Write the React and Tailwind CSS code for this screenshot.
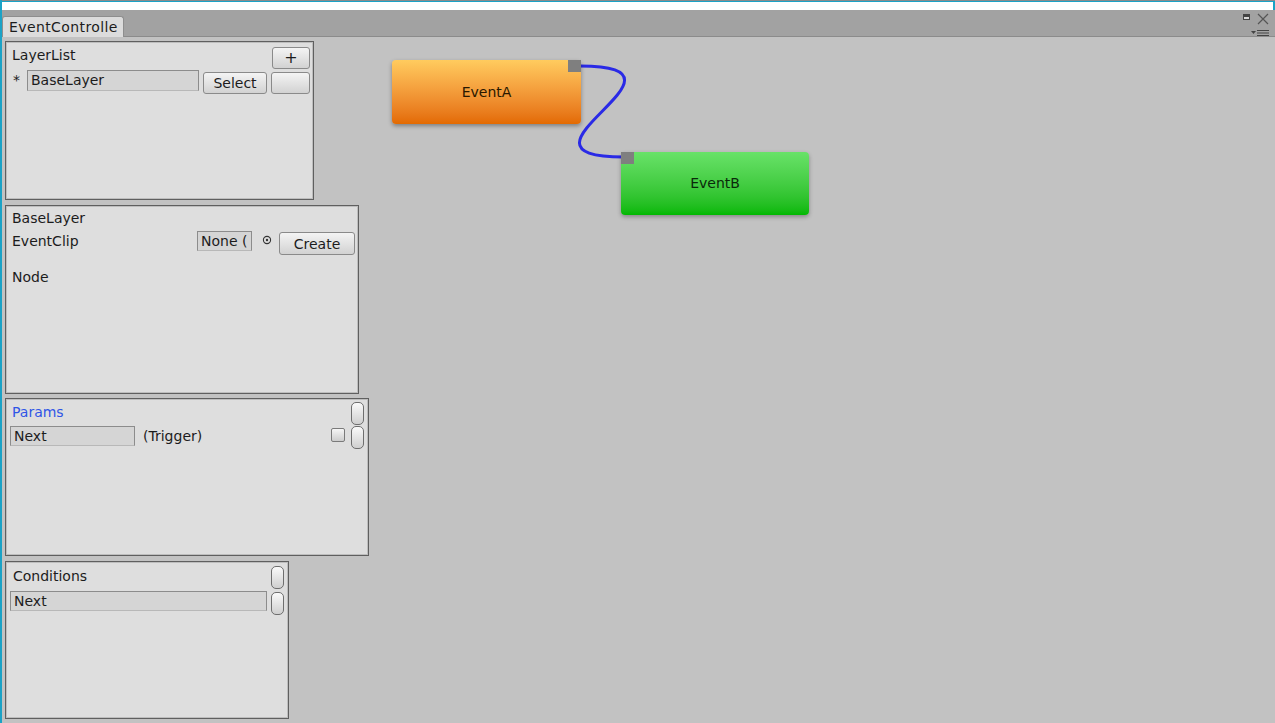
import React from 'react';

const font = { fontFamily: '"DejaVu Sans", Verdana, sans-serif' };

const Btn = ({ className = '', children }) => (
    <div className={`flex items-center justify-center rounded-[3px] border border-[#8a8a8a] bg-gradient-to-b from-[#f4f4f4] to-[#d2d2d2] text-[14px] text-[#1c1c1c] leading-none ${className}`}>
        {children}
    </div>
);

const Pill = ({ className = '' }) => (
    <div className={`w-[13px] h-[23px] rounded-[5px] border border-[#6e6e6e] bg-gradient-to-b from-[#fafafa] to-[#cfcfcf] ${className}`} />
);

const Field = ({ className = '', children }) => (
    <div className={`flex items-center pl-[3px] bg-[#d5d5d5] border border-[#8c8c8c] border-b-[#b8b8b8] text-[14px] text-[#1c1c1c] overflow-hidden whitespace-nowrap ${className}`}>
        {children}
    </div>
);

const Panel = ({ className = '', children }) => (
    <div className={`bg-[#dedede] border border-[#5f5f5f] shadow-[inset_0_0_0_1px_#bdbdbd] ${className}`}>
        {children}
    </div>
);

const App = () => {
    return (
        <div className="relative w-[1275px] h-[723px] overflow-hidden bg-[#c2c2c2] border-l-2 border-[#1ba2c6]" style={font}>
            {/* top strip */}
            <div className="h-[1px] bg-[#8a8a8a]" />
            <div className="h-[1px] bg-[#1ba2c6]" />
            <div className="h-[8px] bg-white border-r-2 border-[#1ba2c6]" />

            {/* toolbar */}
            <div className="relative h-[27px] bg-[#a2a2a2] border-b border-[#8b8b8b]">
                <div className="absolute left-0 bottom-[-1px] w-[122px] h-[21px] rounded-t-[3px] border border-b-0 border-[#8e8e8e] bg-[#dcdcdc] pl-[6px]">
                    <div className="w-[109px] overflow-hidden whitespace-nowrap text-[14px] tracking-[0.4px] leading-[20px] text-[#1c1c1c]">
                        EventController
                    </div>
                </div>
                <div className="absolute left-[1241px] top-[4px] w-[7px] h-[6px] border border-[#444] border-t-[3px] bg-[#d8d8d8]" />
                <svg className="absolute left-[1255px] top-[3px]" width="12" height="12" viewBox="0 0 12 12">
                    <path d="M1 1 L11 11 M11 1 L1 11" stroke="#555" strokeWidth="1.2" />
                </svg>
                <svg className="absolute left-[1248px] top-[19px]" width="20" height="8" viewBox="0 0 20 8">
                    <path d="M1 2 L6 2 L3.5 5 Z" fill="#444" />
                    <path d="M7 1.5 H19 M7 4 H19 M7 6.5 H19" stroke="#444" strokeWidth="1.2" />
                </svg>
            </div>

            {/* side panels */}
            <div className="flex flex-col items-start pl-[3px] pt-[4px]">
                <Panel className="w-[309px] h-[159px]">
                    <div className="flex justify-between mt-[5px] pl-[6px] pr-[3px]">
                        <span className="text-[14px] leading-[16px] text-[#1c1c1c]">LayerList</span>
                        <Btn className="w-[38px] h-[22px] text-[16px]">+</Btn>
                    </div>
                    <div className="flex items-start mt-[1px] pl-[7px] pr-[3px]">
                        <span className="w-[14px] text-[14px] leading-[20px] text-[#1c1c1c]">*</span>
                        <Field className="w-[172px] h-[21px]">BaseLayer</Field>
                        <Btn className="w-[64px] h-[22px] mt-[2px] ml-[4px]">Select</Btn>
                        <Btn className="w-[39px] h-[22px] mt-[2px] ml-[4px]" />
                    </div>
                </Panel>

                <Panel className="w-[354px] h-[189px] mt-[5px]">
                    <div className="pl-[6px] mt-[4px] text-[14px] leading-[16px] text-[#1c1c1c]">BaseLayer</div>
                    <div className="flex items-start mt-[10px] pl-[6px]">
                        <span className="w-[185px] mt-[-3px] text-[14px] leading-[16px] text-[#1c1c1c]">EventClip</span>
                        <Field className="w-[55px] h-[20px] mt-[-5px]">None (</Field>
                        <svg className="ml-[10px] mt-[-1px]" width="10" height="10" viewBox="0 0 10 10">
                            <circle cx="5" cy="5" r="3.6" fill="none" stroke="#333" strokeWidth="1.1" />
                            <circle cx="5" cy="5" r="1.2" fill="#333" />
                        </svg>
                        <Btn className="w-[76px] h-[23px] ml-[7px] mt-[-4px]">Create</Btn>
                    </div>
                    <div className="pl-[6px] mt-[14px] text-[14px] leading-[16px] text-[#1c1c1c]">Node</div>
                </Panel>

                <Panel className="w-[364px] h-[158px] mt-[4px]">
                    <div className="flex justify-between pl-[6px] pr-[4px] mt-[3px]">
                        <span className="mt-[2px] text-[14px] leading-[16px] text-[#2f55e6]">Params</span>
                        <Pill />
                    </div>
                    <div className="flex items-start pl-[4px] pr-[4px] mt-[1px]">
                        <Field className="w-[125px] h-[20px]">Next</Field>
                        <span className="ml-[8px] text-[14px] leading-[20px] text-[#1c1c1c]">(Trigger)</span>
                        <div className="ml-auto mt-[2px] w-[14px] h-[14px] rounded-[2px] border border-[#7a7a7a] bg-gradient-to-b from-[#f6f6f6] to-[#cdcdcd]" />
                        <Pill className="ml-[6px]" />
                    </div>
                </Panel>

                <Panel className="w-[284px] h-[158px] mt-[5px]">
                    <div className="flex justify-between pl-[7px] pr-[4px] mt-[4px]">
                        <span className="mt-[2px] text-[14px] leading-[16px] text-[#1c1c1c]">Conditions</span>
                        <Pill />
                    </div>
                    <div className="flex items-start pl-[4px] pr-[4px] mt-[2px]">
                        <Field className="w-[257px] h-[20px]">Next</Field>
                        <Pill className="ml-[4px] mt-[1px]" />
                    </div>
                </Panel>
            </div>

            {/* connection */}
            <svg className="absolute left-0 top-0 pointer-events-none" width="1275" height="723">
                <path d="M 578 66 C 712 66, 488 157, 622 157" fill="none" stroke="#2a2ae6" strokeWidth="3" />
            </svg>

            {/* nodes */}
            <div className="absolute left-[390px] top-[60px] w-[189px] h-[64px] rounded-[4px] bg-gradient-to-b from-[#ffcb5e] to-[#e36a00] shadow-[0_2px_4px_rgba(0,0,0,0.35)] flex items-center justify-center text-[14px] text-[#2a1800]">
                EventA
                <div className="absolute right-0 top-0 w-[13px] h-[12px] bg-[#7f7f7f]" />
            </div>
            <div className="absolute left-[619px] top-[152px] w-[188px] h-[63px] rounded-[4px] bg-gradient-to-b from-[#68e268] to-[#00b800] shadow-[0_2px_4px_rgba(0,0,0,0.3)] flex items-center justify-center text-[14px] text-[#0a2a0a]">
                EventB
                <div className="absolute left-0 top-0 w-[13px] h-[12px] bg-[#7f7f7f]" />
            </div>
        </div>
    );
};

export default App;
